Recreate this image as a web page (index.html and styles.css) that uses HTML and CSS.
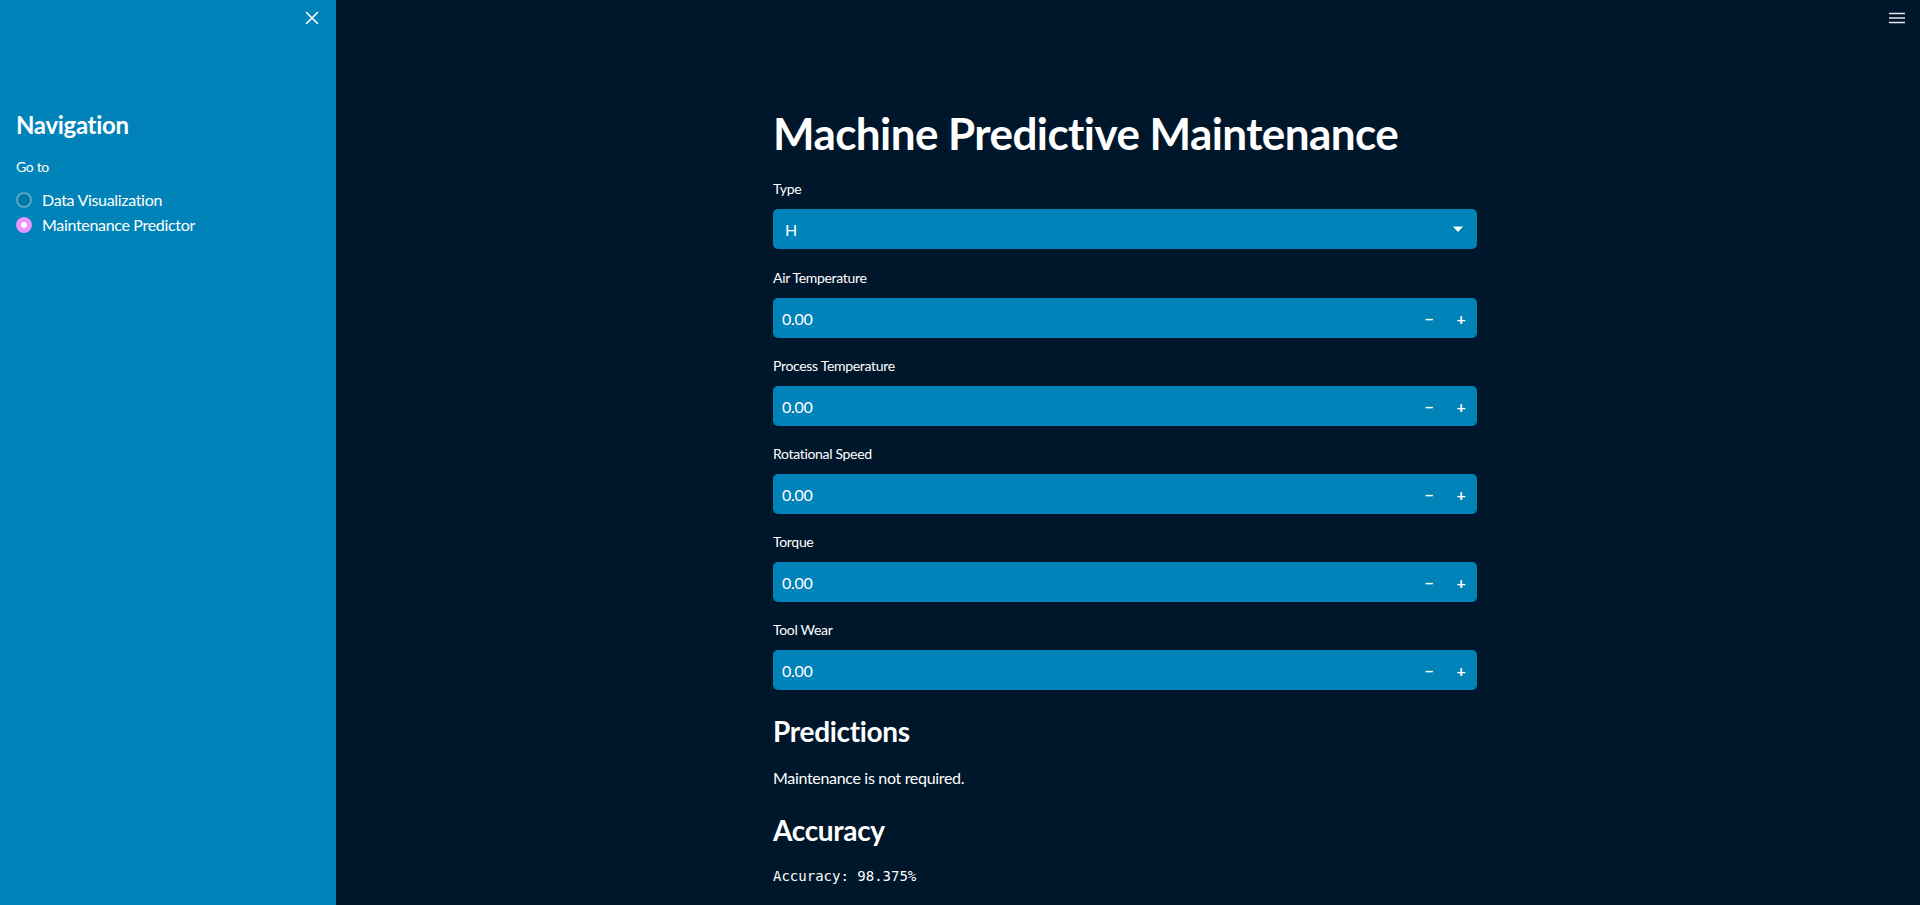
FILE: index.html
```html
<!DOCTYPE html>
<html lang="en">
<head>
<meta charset="utf-8">
<title>Machine Predictive Maintenance</title>
<link rel="stylesheet" href="styles.css">
</head>
<body>
<aside class="sidebar">
  <div class="sidebar-top">
    <button class="icon-btn close-btn" aria-label="Close sidebar">
      <svg width="14" height="14" viewBox="0 0 14 14"><path d="M1.5 1.5L12.5 12.5M12.5 1.5L1.5 12.5" stroke="#fff" stroke-width="1.6" stroke-linecap="round"/></svg>
    </button>
  </div>
  <div class="sidebar-content">
    <h2 class="side-title">Navigation</h2>
    <div class="side-label">Go to</div>
    <div class="radio-group">
      <label class="radio"><span class="radio-dot"></span><span>Data Visualization</span></label>
      <label class="radio checked"><span class="radio-dot"></span><span>Maintenance Predictor</span></label>
    </div>
  </div>
</aside>
<main class="main">
  <header class="main-top">
    <button class="icon-btn menu-btn" aria-label="Menu">
      <svg width="18" height="14" viewBox="0 0 18 14"><path d="M1 2.5H17M1 7H17M1 11.5H17" stroke="#e6e9ee" stroke-width="1.6"/></svg>
    </button>
  </header>
  <section class="content">
    <h1 class="title">Machine Predictive Maintenance</h1>

    <div class="widget widget-select">
      <div class="w-label">Type</div>
      <div class="select">
        <span>H</span>
        <svg width="12" height="8" viewBox="0 0 12 8"><path d="M1 1.5H11L6 7Z" fill="#fff"/></svg>
      </div>
    </div>

    <div class="widget">
      <div class="w-label">Air Temperature</div>
      <div class="num"><span class="num-val">0.00</span><span class="step">&minus;</span><span class="step">+</span></div>
    </div>
    <div class="widget">
      <div class="w-label">Process Temperature</div>
      <div class="num"><span class="num-val">0.00</span><span class="step">&minus;</span><span class="step">+</span></div>
    </div>
    <div class="widget">
      <div class="w-label">Rotational Speed</div>
      <div class="num"><span class="num-val">0.00</span><span class="step">&minus;</span><span class="step">+</span></div>
    </div>
    <div class="widget">
      <div class="w-label">Torque</div>
      <div class="num"><span class="num-val">0.00</span><span class="step">&minus;</span><span class="step">+</span></div>
    </div>
    <div class="widget">
      <div class="w-label">Tool Wear</div>
      <div class="num"><span class="num-val">0.00</span><span class="step">&minus;</span><span class="step">+</span></div>
    </div>

    <h3 class="sub predictions">Predictions</h3>
    <p class="text">Maintenance is not required.</p>
    <h3 class="sub accuracy">Accuracy</h3>
    <pre class="mono">Accuracy: 98.375%</pre>
  </section>
</main>
</body>
</html>
```

FILE: styles.css
```css
* { box-sizing: border-box; }
html, body { height: 100%; }
body {
  margin: 0;
  display: flex;
  height: 905px;
  overflow: hidden;
  background: #00172b;
  color: #ffffff;
  font-family: "Lato", "Noto Sans", sans-serif;
  letter-spacing: -0.02em;
}
.icon-btn {
  background: none;
  border: none;
  padding: 0;
  margin: 0;
  display: flex;
  align-items: center;
  justify-content: center;
  cursor: pointer;
}

/* Sidebar */
.sidebar {
  width: 336px;
  flex: 0 0 336px;
  background: #0083b8;
}
.sidebar-top {
  height: 36px;
  display: flex;
  justify-content: flex-end;
  align-items: center;
  padding-right: 12px;
}
.close-btn { width: 24px; height: 24px; }
.sidebar-content { padding: 74px 16px 0; }
.side-title {
  margin: 0;
  font-size: 24px;
  line-height: 29px;
  font-weight: 700;
}
.side-label {
  margin-top: 17px;
  font-size: 14px;
  line-height: 21px;
}
.radio-group {
  margin-top: 10px;
  display: flex;
  flex-direction: column;
}
.radio {
  display: flex;
  align-items: center;
  gap: 10px;
  height: 25px;
  font-size: 16px;
}
.radio-dot {
  width: 16px;
  height: 16px;
  border-radius: 50%;
  border: 2px solid rgba(255, 255, 255, 0.35);
  background: #0077a8;
  flex: 0 0 16px;
}
.radio.checked .radio-dot {
  border: 5px solid #e694ff;
  background: #ffffff;
}

/* Main */
.main {
  flex: 1;
  display: flex;
  flex-direction: column;
  padding-right: 6px;
}
.main-top {
  height: 36px;
  display: flex;
  justify-content: flex-end;
  align-items: center;
  padding-right: 5px;
}
.menu-btn { width: 24px; height: 24px; }
.content {
  width: 704px;
  margin: 0 auto;
}
.title {
  margin: 71px 0 0;
  font-size: 44px;
  line-height: 53px;
  font-weight: 700;
  letter-spacing: -0.013em;
}
.widget { margin-top: 16px; }
.widget-select { margin-top: 17px; }
.widget-select + .widget { margin-top: 17px; }
.w-label {
  font-size: 14px;
  line-height: 24px;
  height: 24px;
  margin-bottom: 8px;
}
.select, .num {
  height: 40px;
  background: #0083b8;
  border-radius: 5px;
  display: flex;
  align-items: center;
}
.select {
  padding: 0 13px 0 12px;
  justify-content: space-between;
  font-size: 16px;
}
.num { font-size: 16px; }
.num-val {
  flex: 1;
  padding-left: 9px;
}
.step {
  width: 32px;
  text-align: center;
  font-weight: 700;
  font-size: 16px;
}
.sub {
  margin: 0;
  font-size: 28px;
  line-height: 34px;
  font-weight: 700;
}
.predictions { margin-top: 24px; }
.accuracy { margin-top: 22px; }
.text {
  margin: 17px 0 0;
  font-size: 16px;
  line-height: 26px;
}
.mono {
  margin: 18px 0 0;
  font-family: "DejaVu Sans Mono", "Liberation Mono", monospace;
  font-size: 14px;
  line-height: 22px;
  letter-spacing: 0;
}
```
